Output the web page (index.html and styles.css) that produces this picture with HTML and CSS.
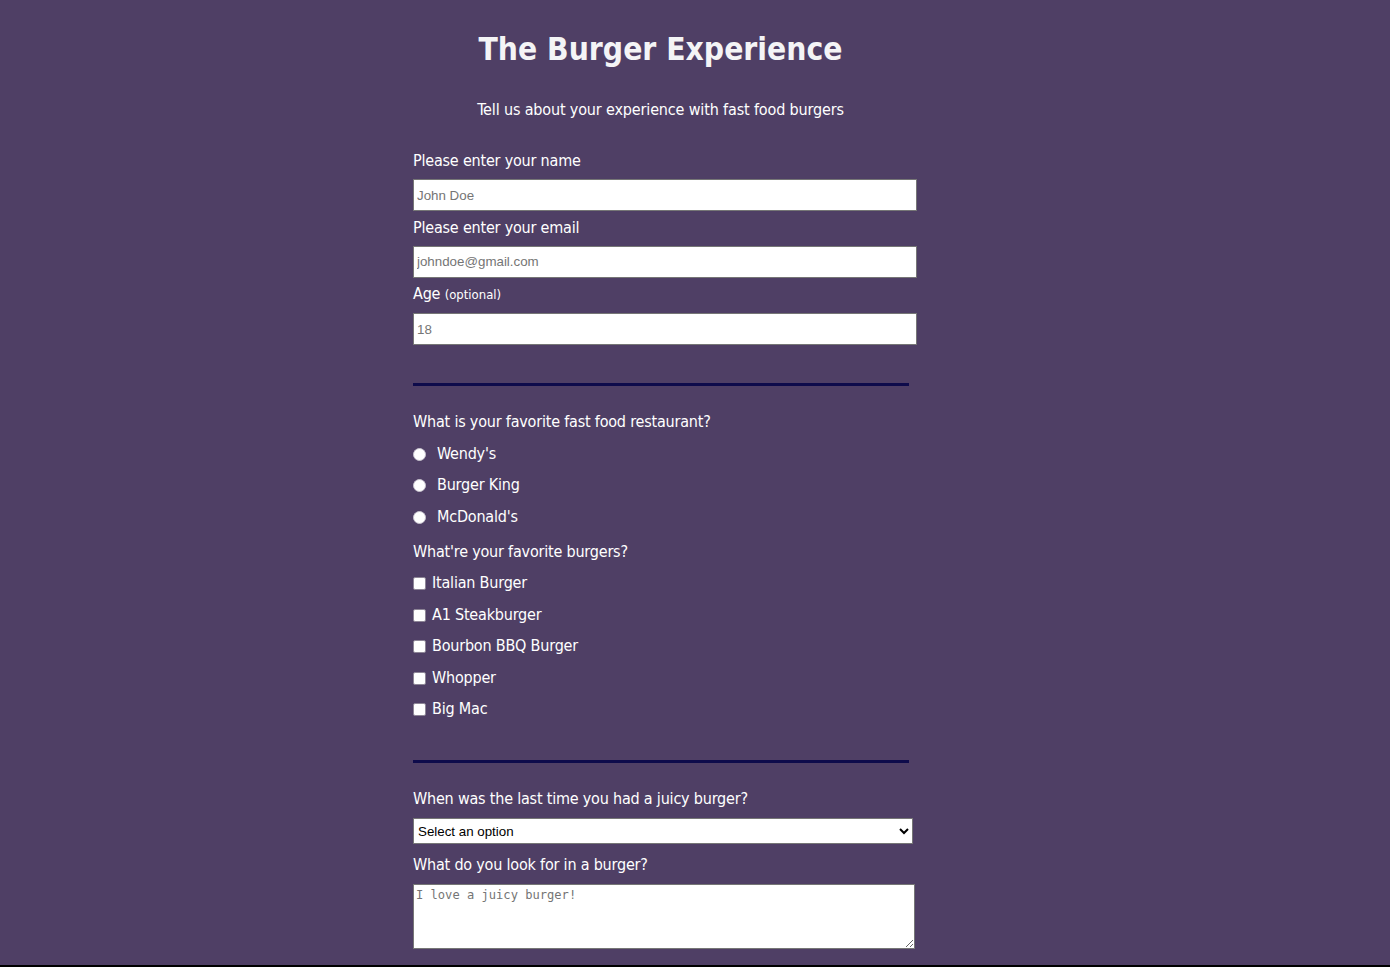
FILE: index.html
```html
<!DOCTYPE html>
<html lang="en">
<head>
<meta charset="utf-8">
<title>The Burger Experience</title>
<link rel="stylesheet" href="styles.css">
</head>
<body>
<div class="page">
  <main class="survey">
    <h1 class="title">The Burger Experience</h1>
    <p class="subtitle">Tell us about your experience with fast food burgers</p>
    <form class="form">
      <label class="label" for="name">Please enter your name</label>
      <input class="field" id="name" type="text" placeholder="John Doe">
      <label class="label" for="email">Please enter your email</label>
      <input class="field" id="email" type="email" placeholder="johndoe@gmail.com">
      <label class="label" for="age">Age <span class="small">(optional)</span></label>
      <input class="field" id="age" type="number" placeholder="18">

      <hr class="divider">

      <p class="question q1">What is your favorite fast food restaurant?</p>
      <label class="option radio-opt"><input class="radio" type="radio" name="rest"> Wendy's</label>
      <label class="option radio-opt"><input class="radio" type="radio" name="rest"> Burger King</label>
      <label class="option radio-opt"><input class="radio" type="radio" name="rest"> McDonald's</label>

      <p class="question q2">What're your favorite burgers?</p>
      <label class="option check-opt"><input class="check" type="checkbox"> Italian Burger</label>
      <label class="option check-opt"><input class="check" type="checkbox"> A1 Steakburger</label>
      <label class="option check-opt"><input class="check" type="checkbox"> Bourbon BBQ Burger</label>
      <label class="option check-opt"><input class="check" type="checkbox"> Whopper</label>
      <label class="option check-opt"><input class="check" type="checkbox"> Big Mac</label>

      <hr class="divider divider2">

      <p class="question q3">When was the last time you had a juicy burger?</p>
      <select class="select">
        <option>Select an option</option>
        <option>Today</option>
        <option>This week</option>
        <option>This month</option>
      </select>
      <p class="question q4">What do you look for in a burger?</p>
      <textarea class="textarea" placeholder="I love a juicy burger!"></textarea>
    </form>
  </main>
</div>
</body>
</html>
```

FILE: styles.css
```css
html, body {
  margin: 0;
  padding: 0;
}
body {
  background: #000;
  font-family: "DejaVu Sans Condensed", "DejaVu Sans", Verdana, sans-serif;
  color: #fff;
}
.page {
  background: #4f3f65;
  height: 965px;
  overflow: hidden;
  display: flex;
  justify-content: center;
  padding-right: 60px;
  box-sizing: border-box;
}
.survey {
  width: 504px;
  display: flex;
  flex-direction: column;
}
.title {
  margin: 29px 0 0;
  padding-right: 9px;
  text-align: center;
  font-size: 31.5px;
  line-height: 40px;
  font-weight: bold;
  color: #f4f4f6;
  font-family: "DejaVu Sans Condensed", "DejaVu Sans", Verdana, sans-serif;
}
.subtitle {
  margin: 30px 0 0;
  padding-right: 9px;
  text-align: center;
  font-size: 16px;
  line-height: 22px;
  letter-spacing: -0.15px;
}
.form {
  display: flex;
  flex-direction: column;
  align-items: flex-start;
  margin-top: 29px;
}
.label, .question, .option {
  font-size: 16px;
  line-height: 22px;
  letter-spacing: -0.2px;
  margin: 0;
}
.small {
  font-size: 13px;
  letter-spacing: 0;
}
.field {
  box-sizing: border-box;
  width: 504px;
  height: 32px;
  margin: 7px 0 5.5px;
  border: 1px solid #767676;
  padding: 0 3px;
  font-family: "Liberation Sans", Arial, sans-serif;
  font-size: 13.33px;
  background: #fff;
}
.field::placeholder {
  color: #757575;
}
.divider {
  width: 496px;
  margin: 32.5px 0 0;
  border: 0;
  height: 3px;
  background: #0e0b4b;
}
.q1 { margin-top: 25px; }
.q2 { margin-top: 13px; }
.q3 { margin-top: 25px; }
.q4 { margin-top: 10px; }
.divider2 { margin-top: 40px; }
.option {
  display: flex;
  align-items: center;
  margin-top: 9.5px;
}
.radio-opt .radio {
  appearance: none;
  -webkit-appearance: none;
  width: 13px;
  height: 13px;
  margin: 1px 11px 0 0;
  border-radius: 50%;
  background: #fff;
  border: 1px solid #c9c4cf;
  box-sizing: border-box;
}
.check-opt .check {
  appearance: none;
  -webkit-appearance: none;
  width: 13px;
  height: 13px;
  margin: 1px 6px 0 0;
  border-radius: 2px;
  background: #fff;
  border: 1px solid #8d8596;
  box-sizing: border-box;
}
.select {
  box-sizing: border-box;
  width: 500px;
  height: 26px;
  margin-top: 8px;
  border: 1px solid #767676;
  border-radius: 0;
  background: #fff;
  font-family: "Liberation Sans", Arial, sans-serif;
  font-size: 13.33px;
  color: #000;
  padding: 0;
}
.textarea {
  box-sizing: border-box;
  width: 502px;
  height: 65px;
  margin-top: 8px;
  border: 1px solid #767676;
  font-family: "DejaVu Sans Mono", "Liberation Mono", monospace;
  font-size: 12.1px;
  padding: 3px 2px;
  resize: both;
}
.textarea::placeholder {
  color: #757575;
}
```
